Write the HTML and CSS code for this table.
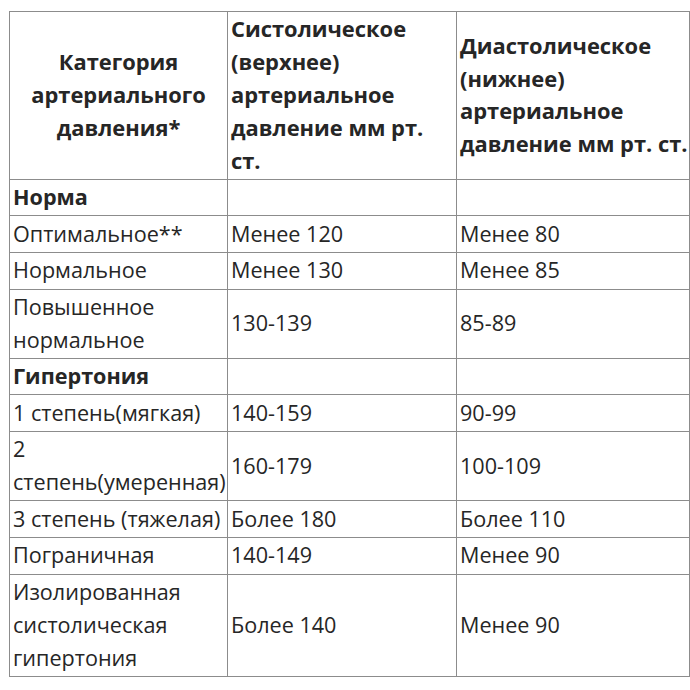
FILE: index.html
```html
<!DOCTYPE html>
<html lang="ru">
<head>
<meta charset="utf-8">
<link rel="stylesheet" href="styles.css">
</head>
<body>
<div class="wrap">
<table class="bp">
  <colgroup>
    <col class="c1"><col class="c2"><col class="c3">
  </colgroup>
  <thead>
    <tr>
      <th class="h1">Категория артериального давления*</th>
      <th class="h2">Систолическое (верхнее) артериальное давление мм рт. ст.</th>
      <th class="h3">Диастолическое (нижнее) артериальное давление мм рт. ст.</th>
    </tr>
  </thead>
  <tbody>
    <tr><td class="group">Норма</td><td></td><td></td></tr>
    <tr><td>Оптимальное**</td><td>Менее 120</td><td>Менее 80</td></tr>
    <tr><td>Нормальное</td><td>Менее 130</td><td>Менее 85</td></tr>
    <tr><td>Повышенное нормальное</td><td>130-139</td><td>85-89</td></tr>
    <tr><td class="group">Гипертония</td><td></td><td></td></tr>
    <tr><td>1 степень(мягкая)</td><td>140-159</td><td>90-99</td></tr>
    <tr><td>2 степень(умеренная)</td><td>160-179</td><td>100-109</td></tr>
    <tr><td>3 степень (тяжелая)</td><td>Более 180</td><td>Более 110</td></tr>
    <tr><td>Пограничная</td><td>140-149</td><td>Менее 90</td></tr>
    <tr><td>Изолированная систолическая гипертония</td><td>Более 140</td><td>Менее 90</td></tr>
  </tbody>
</table>
</div>
</body>
</html>
```

FILE: styles.css
```css
html, body {
  margin: 0;
  padding: 0;
  background: #ffffff;
}

.wrap {
  padding: 11px 0 0 9px;
}

.bp {
  border-collapse: collapse;
  width: 680px;
  table-layout: fixed;
  font-family: "Open Sans", "Noto Sans", sans-serif;
  font-size: 21.6px;
  line-height: 32.8px;
  color: #262626;
}

.c1 { width: 218px; }
.c2 { width: 229px; }
.c3 { width: 233px; }

.bp th,
.bp td {
  border: 1px solid #8c8c8c;
  padding: 1.4px 0 1.4px 3px;
  vertical-align: middle;
  text-align: left;
}

.bp th {
  font-weight: 700;
  font-size: 21.9px;
}

.bp .h1 {
  text-align: center;
  padding-right: 3px;
}

.bp .h2 {
  vertical-align: top;
  padding-right: 5px;
}

.bp .group {
  font-weight: 700;
}
```
